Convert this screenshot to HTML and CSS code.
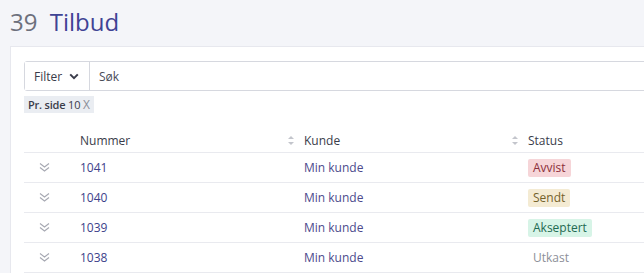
FILE: index.html
```html
<!DOCTYPE html>
<html lang="no">
<head>
    <meta charset="UTF-8">
    <meta name="viewport" content="width=device-width, initial-scale=1.0">
    <title>Tilbud</title>
    <link rel="stylesheet" href="styles.css">
</head>
<body>

<h1 class="page-title"><span class="count">39</span> <span class="name">Tilbud</span></h1>

<div class="card">
    <div class="search-bar">
        <button class="filter-btn" type="button">Filter
            <svg class="chev" width="10" height="7" viewBox="0 0 10 7"><path d="M1.2 1.4 5 5.2 8.8 1.4" fill="none" stroke="#3a3c4a" stroke-width="2"/></svg>
        </button>
        <input class="search-input" type="text" placeholder="Søk">
    </div>

    <div class="chips">
        <span class="chip"><b>Pr. side</b> 10 <span class="chip-x">X</span></span>
    </div>

    <table class="list">
        <thead>
            <tr>
                <th class="col-exp"></th>
                <th class="col-num">Nummer <span class="sort"></span></th>
                <th class="col-cust">Kunde <span class="sort"></span></th>
                <th class="col-status">Status</th>
            </tr>
        </thead>
        <tbody>
            <tr>
                <td class="col-exp"><svg class="expand" width="11" height="11" viewBox="0 0 11 11"><path d="M1 1.5 5.5 5 10 1.5M1 5.5 5.5 9 10 5.5" fill="none" stroke="#a6a8b2" stroke-width="1.1"/></svg></td>
                <td><a href="#">1041</a></td>
                <td><a href="#" class="cust">Min kunde</a></td>
                <td><span class="badge rejected">Avvist</span></td>
            </tr>
            <tr>
                <td class="col-exp"><svg class="expand" width="11" height="11" viewBox="0 0 11 11"><path d="M1 1.5 5.5 5 10 1.5M1 5.5 5.5 9 10 5.5" fill="none" stroke="#a6a8b2" stroke-width="1.1"/></svg></td>
                <td><a href="#">1040</a></td>
                <td><a href="#" class="cust">Min kunde</a></td>
                <td><span class="badge sent">Sendt</span></td>
            </tr>
            <tr>
                <td class="col-exp"><svg class="expand" width="11" height="11" viewBox="0 0 11 11"><path d="M1 1.5 5.5 5 10 1.5M1 5.5 5.5 9 10 5.5" fill="none" stroke="#a6a8b2" stroke-width="1.1"/></svg></td>
                <td><a href="#">1039</a></td>
                <td><a href="#" class="cust">Min kunde</a></td>
                <td><span class="badge accepted">Akseptert</span></td>
            </tr>
            <tr>
                <td class="col-exp"><svg class="expand" width="11" height="11" viewBox="0 0 11 11"><path d="M1 1.5 5.5 5 10 1.5M1 5.5 5.5 9 10 5.5" fill="none" stroke="#a6a8b2" stroke-width="1.1"/></svg></td>
                <td><a href="#">1038</a></td>
                <td><a href="#" class="cust">Min kunde</a></td>
                <td><span class="badge draft">Utkast</span></td>
            </tr>
        </tbody>
    </table>
</div>

</body>
</html>
```

FILE: styles.css
```css
body {
    margin: 0;
    height: 100vh;
    background-color: #f4f5f9;
    font-family: "Open Sans", "Noto Sans", sans-serif;
    font-size: 12px;
    color: #3a3c4a;
    overflow: hidden;
    display: flex;
    flex-direction: column;
}
.page-title {
    margin: 0;
    padding: 7px 10px 0;
    height: 39px;
    font-size: 24px;
    font-weight: 400;
    line-height: 30px;
}
.page-title .count {
    color: #6d707c;
    margin-right: 6px;
}
.page-title .name {
    color: #3f4394;
}
.card {
    flex: 1;
    margin-left: 10px;
    padding: 14px 0 0 13px;
    background-color: #fff;
    border: 1px solid #e7e8ee;
    border-right: none;
    border-bottom: none;
    overflow: hidden;
}
.search-bar {
    display: flex;
    width: 640px;
    height: 30px;
    border: 1px solid #d6d8df;
    border-radius: 3px;
    box-sizing: border-box;
}
.filter-btn {
    display: flex;
    align-items: center;
    gap: 7px;
    width: 65px;
    padding: 0 0 0 9px;
    border: none;
    border-right: 1px solid #d6d8df;
    background: #fff;
    font-family: inherit;
    font-size: 12px;
    color: #3a3c4a;
}
.search-input {
    flex: 1;
    min-width: 0;
    border: none;
    padding: 0 9px;
    font-family: inherit;
    font-size: 12px;
    outline: none;
}
.search-input::placeholder {
    color: #4a4c58;
}
.chips {
    margin-top: 5px;
    height: 17px;
}
.chip {
    display: inline-block;
    height: 17px;
    padding: 0 4px;
    background-color: #eaedf2;
    font-size: 11px;
    line-height: 17px;
    color: #3a3c4a;
    letter-spacing: -0.2px;
}
.chip b {
    font-weight: 600;
}
.chip-x {
    color: #8a8d98;
    font-size: 12px;
}
.list {
    margin-top: 10px;
    border-collapse: collapse;
    width: 747px;
}
.list th, .list td {
    height: 29px;
    padding: 0 6px;
    text-align: left;
    border-bottom: 1px solid #e9eaef;
    white-space: nowrap;
}
.list th {
    padding-top: 5px;
    height: 24px;
    font-weight: 400;
    color: #3a3c4a;
    position: relative;
}
.list th.col-exp, .list td.col-exp {
    width: 35px;
    padding-left: 15px;
    padding-right: 0;
}
.list th.col-num {
    width: 212px;
}
.list th.col-cust {
    width: 212px;
}
.sort {
    position: absolute;
    right: 4px;
    top: 13px;
    width: 6px;
    height: 9px;
}
.sort::before, .sort::after {
    content: "";
    position: absolute;
    left: 0;
    border-left: 3px solid transparent;
    border-right: 3px solid transparent;
}
.sort::before {
    top: 0;
    border-bottom: 3px solid #c3c5cc;
}
.sort::after {
    bottom: 0;
    border-top: 3px solid #c3c5cc;
}
.expand {
    display: block;
}
.list a {
    color: #3c3f8a;
    text-decoration: none;
}
.list a.cust {
    color: #4c4a8c;
}
.badge {
    display: inline-block;
    padding: 0 5px;
    line-height: 18px;
    border-radius: 2px;
}
.badge.rejected {
    background-color: #f6d5d8;
    color: #8c2f3b;
}
.badge.sent {
    background-color: #f4ebd3;
    color: #74622b;
}
.badge.accepted {
    background-color: #d7f4e7;
    color: #236a52;
}
.badge.draft {
    color: #8d8f98;
}
```
